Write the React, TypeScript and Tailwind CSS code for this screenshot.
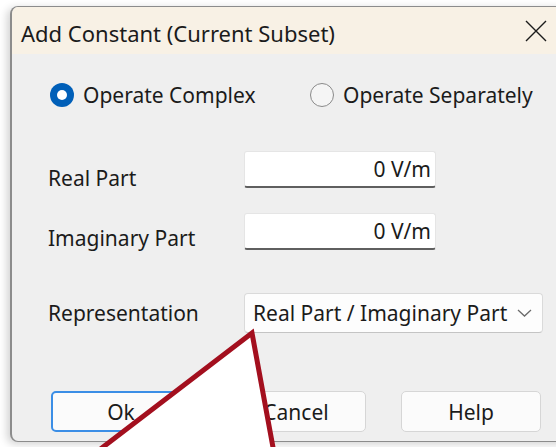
import type { ReactNode } from "react";

const font = { fontFamily: '"Noto Sans", "Open Sans", sans-serif' };

function Radio({ checked, label }: { checked?: boolean; label: string }) {
  return (
    <label className="flex items-center gap-[9px]">
      {checked ? (
        <span className="flex h-[24px] w-[24px] items-center justify-center rounded-full bg-[#005fb8]">
          <span className="h-[10px] w-[10px] rounded-full bg-white" />
        </span>
      ) : (
        <span className="h-[24px] w-[24px] rounded-full border-[1.5px] border-[#8a8a8a] bg-[#f5f5f5]" />
      )}
      <span>{label}</span>
    </label>
  );
}

function Field({ label, labelClass, children }: { label: string; labelClass?: string; children: ReactNode }) {
  return (
    <div className="flex items-center">
      <span className={labelClass ? `w-[196px] ${labelClass}` : "w-[196px]"}>{label}</span>
      {children}
    </div>
  );
}

function NumberBox({ value }: { value: string }) {
  return (
    <div className="flex h-[37px] w-[192px] items-center justify-end rounded-[3px] border border-[#e5e5e5] border-b-2 border-b-[#5f5f5f] bg-white pr-[4px]">
      {value}
    </div>
  );
}

function Button({ children, focused }: { children: ReactNode; focused?: boolean }) {
  return (
    <button
      type="button"
      className={
        focused
          ? "flex h-[41px] w-[140px] items-center justify-center rounded-[5px] border-2 border-[#3b8ee6] bg-[#fbfbfb]"
          : "flex h-[41px] w-[140px] items-center justify-center rounded-[5px] border border-[#d6d6d6] bg-[#fbfbfb]"
      }
    >
      {children}
    </button>
  );
}

export default function App() {
  return (
    <div className="relative h-[447px] w-[556px] overflow-hidden bg-white pl-[10px] pt-[6px] text-[21px] leading-[24px] text-[#1b1b1b]" style={font}>
      <div className="w-[566px] overflow-hidden rounded-l-[8px] border-b border-l-2 border-t border-[#8c8c8c] bg-[#efefef] shadow-[-3px_2px_8px_rgba(0,0,0,0.18)]">
        <div className="flex h-[47px] items-center justify-between bg-[#f8f1e5] pl-[9px] pr-[29px] pt-[4px]">
          <span className="text-[22px]">Add Constant (Current Subset)</span>
          <svg width="22" height="22" viewBox="0 0 22 22" className="-mt-[4px]">
            <path d="M1 1 21 21M21 1 1 21" stroke="#1b1b1b" strokeWidth="1.4" />
          </svg>
        </div>

        <div className="flex flex-col pb-[9px] pl-[36px] pt-[29px]">
          <div className="flex items-center pl-[2px]">
            <div className="w-[260px]">
              <Radio checked label="Operate Complex" />
            </div>
            <Radio label="Operate Separately" />
          </div>

          <div className="mt-[44px] flex flex-col gap-[25px]">
            <Field label="Real Part" labelClass="translate-y-[8px]">
              <NumberBox value="0 V/m" />
            </Field>
            <Field label="Imaginary Part" labelClass="translate-y-[6px]">
              <NumberBox value="0 V/m" />
            </Field>
          </div>

          <div className="mt-[43px]">
            <Field label="Representation">
              <div className="flex h-[40px] w-[299px] items-center justify-between rounded-[4px] border border-[#dadada] border-b-[#c4c4c4] bg-[#fdfdfd] pl-[8px] pr-[10px]">
                <span>Real Part / Imaginary Part</span>
                <svg width="15" height="8" viewBox="0 0 15 8">
                  <path d="M1 1l6.5 6L14 1" fill="none" stroke="#6b6b6b" strokeWidth="1.3" />
                </svg>
              </div>
            </Field>
          </div>

          <div className="ml-[3px] mt-[58px] flex gap-[35px]">
            <Button focused>Ok</Button>
            <Button>Cancel</Button>
            <Button>Help</Button>
          </div>
        </div>
      </div>

      {/* callout pointer laid over the dialog */}
      <svg className="pointer-events-none absolute left-0 top-0" width="556" height="447" viewBox="0 0 556 447">
        <polygon points="252,333 60,480 279,480" fill="#ffffff" stroke="#a30f1e" strokeWidth="5" strokeLinejoin="miter" />
      </svg>
    </div>
  );
}
